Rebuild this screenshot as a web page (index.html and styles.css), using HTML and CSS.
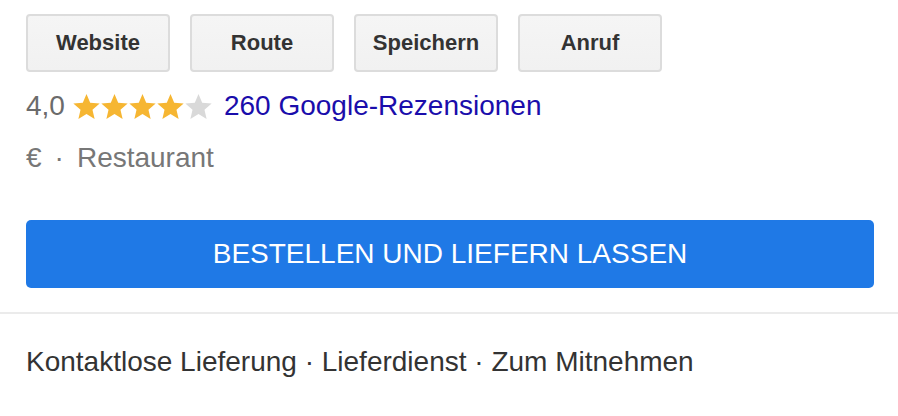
FILE: index.html
```html
<!DOCTYPE html>
<html lang="de">
<head>
    <meta charset="UTF-8">
    <meta name="viewport" content="width=device-width, initial-scale=1.0">
    <title>Restaurant</title>
    <link rel="stylesheet" href="styles.css">
</head>
<body>
    <div class="place">
        <div class="actions">
            <a class="action-btn" href="#">Website</a>
            <a class="action-btn" href="#">Route</a>
            <a class="action-btn" href="#">Speichern</a>
            <a class="action-btn" href="#">Anruf</a>
        </div>

        <div class="rating">
            <span class="score">4,0</span>
            <span class="stars">
                <svg class="star on" viewBox="2 2 20 19"><path d="M12 17.27L18.18 21l-1.64-7.03L22 9.24l-7.19-.61L12 2 9.19 8.63 2 9.24l5.46 4.73L5.82 21z"/></svg>
                <svg class="star on" viewBox="2 2 20 19"><path d="M12 17.27L18.18 21l-1.64-7.03L22 9.24l-7.19-.61L12 2 9.19 8.63 2 9.24l5.46 4.73L5.82 21z"/></svg>
                <svg class="star on" viewBox="2 2 20 19"><path d="M12 17.27L18.18 21l-1.64-7.03L22 9.24l-7.19-.61L12 2 9.19 8.63 2 9.24l5.46 4.73L5.82 21z"/></svg>
                <svg class="star on" viewBox="2 2 20 19"><path d="M12 17.27L18.18 21l-1.64-7.03L22 9.24l-7.19-.61L12 2 9.19 8.63 2 9.24l5.46 4.73L5.82 21z"/></svg>
                <svg class="star" viewBox="2 2 20 19"><path d="M12 17.27L18.18 21l-1.64-7.03L22 9.24l-7.19-.61L12 2 9.19 8.63 2 9.24l5.46 4.73L5.82 21z"/></svg>
            </span>
            <a class="reviews" href="#">260 Google-Rezensionen</a>
        </div>

        <div class="meta">€<span class="dot">·</span>Restaurant</div>

        <a class="order-btn" href="#">BESTELLEN UND LIEFERN LASSEN</a>
    </div>

    <div class="divider"></div>

    <div class="services">Kontaktlose Lieferung · Lieferdienst · Zum Mitnehmen</div>
</body>
</html>
```

FILE: styles.css
```css
body {
    font-family: "Liberation Sans", Arial, sans-serif;
    margin: 0;
    padding: 0;
    background-color: #fff;
    font-size: 28px;
}

a {
    text-decoration: none;
}

.place {
    padding: 14px 24px 0 26px;
}

.actions {
    display: flex;
    gap: 20px;
}

.action-btn {
    display: flex;
    align-items: center;
    justify-content: center;
    width: 144px;
    height: 58px;
    box-sizing: border-box;
    border: 2px solid #dcdcdc;
    border-radius: 4px;
    background: linear-gradient(#f5f5f5, #f1f1f1);
    color: #333;
    font-size: 22px;
    font-weight: bold;
}

.rating {
    display: flex;
    align-items: center;
    margin-top: 18px;
    line-height: 32px;
}

.score {
    color: #6b6b6b;
}

.stars {
    display: flex;
    gap: 1px;
    margin: 0 12px 0 8px;
}

.star {
    width: 27px;
    height: 25px;
    fill: #d9d9d9;
}

.star.on {
    fill: #f6b632;
}

.reviews {
    color: #1a0dab;
}

.meta {
    margin-top: 20px;
    line-height: 32px;
    color: #777;
}

.meta .dot {
    margin: 0 13px 0 13px;
}

.order-btn {
    display: block;
    margin-top: 46px;
    height: 68px;
    line-height: 68px;
    border-radius: 5px;
    background-color: #1f79e6;
    color: #fff;
    text-align: center;
}

.divider {
    margin-top: 24px;
    height: 2px;
    background-color: #ebebeb;
}

.services {
    margin-top: 32px;
    padding-left: 26px;
    line-height: 32px;
    color: #333;
}
```
